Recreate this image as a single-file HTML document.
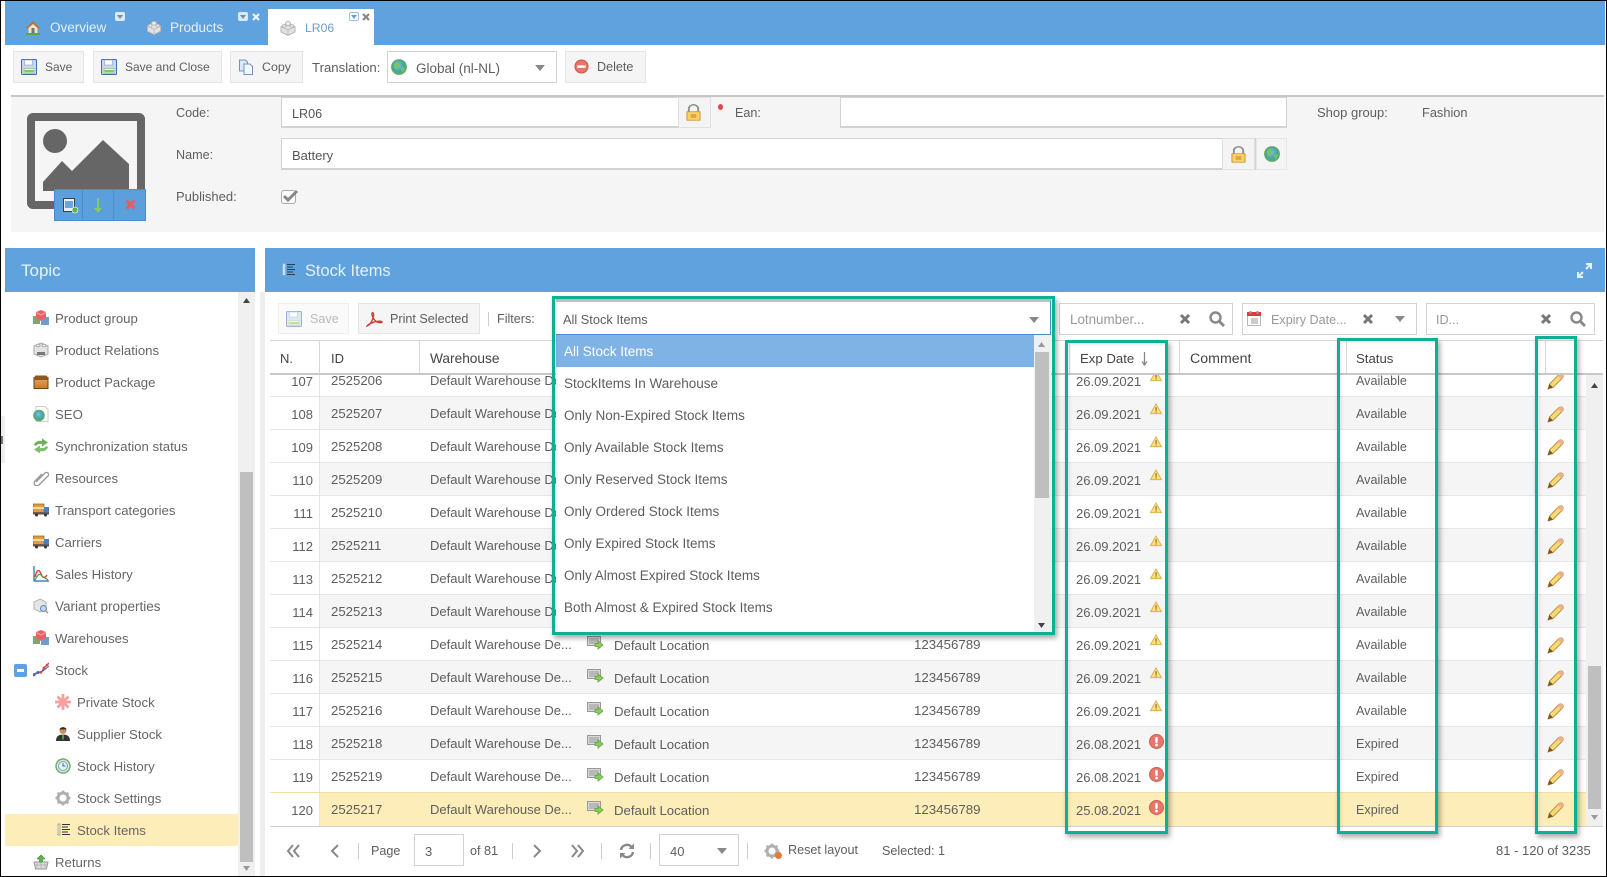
<!DOCTYPE html>
<html><head><meta charset="utf-8"><title>LR06</title>
<style>
*{box-sizing:border-box}
html,body{margin:0;padding:0}
body{width:1607px;height:877px;overflow:hidden;background:#fff;font-family:"Liberation Sans",sans-serif;font-size:12.6px;color:#5e5e5e;position:relative}
#f{position:absolute;inset:0;border:1px solid #000;z-index:50;pointer-events:none}
.a{position:absolute}
.t{position:absolute;white-space:nowrap;line-height:16px;height:16px}
.k{font-size:13.2px;color:#666}
.m{font-size:13.5px;z-index:22;left:564px}
.bar{position:absolute;background:#5fa2de}
.btn{position:absolute;background:#f5f5f5;border:1px solid #e4e4e4}
.inp{position:absolute;background:#fff;border:1px solid #d2d2d2}
svg{position:absolute;display:block;overflow:visible}
.h{color:#e4effa}
#rows{position:absolute;left:270px;top:375px;width:1316px;height:451px;overflow:hidden;background:#fff}
.r{position:absolute;left:0;width:1316px;height:33px;border-top:1px solid #e6e6e6;background:#fff}
.e{background:#f5f5f5}
.y{background:#fdedb9;border-top-color:#f0dfa8;height:34px}
.r b{font-weight:normal;position:absolute;white-space:nowrap;top:9px;line-height:16px}
.r b.n{left:0;top:0;width:50px;height:100%;background:#fff;border-right:1px solid #e6e6e6;line-height:35px;text-align:right;padding-right:6px;font-size:13px}
.r b.i{left:61px;font-size:13.2px}
.r b.c{left:160px;font-size:13px}
.r b.l{left:344px;top:10px;font-size:13.2px}
.r b.o{left:644px;font-size:13.3px}
.r b.d{left:806px;top:10px;font-size:13px}
.r b.s{left:1086px;font-size:12.6px}
.li{left:317px;top:7px;width:17px;height:17px}
.wi{left:880px;top:6px;width:12px;height:12px}
.xi{left:879px;top:7px;width:15px;height:15px}
.pi{left:1277px;top:9px;width:17px;height:17px}
.gb{position:absolute;border:3.5px solid #0db092;box-shadow:2px 3px 5px rgba(0,0,0,.35),inset 2px 2px 3px rgba(0,0,0,.08);z-index:30;border-top-width:3px;border-bottom-width:3px}
.hd{position:absolute;top:341px;width:1px;height:32px;background:#d8d8d8}
.sep{position:absolute;width:1px;height:16px;background:#ccc;top:843px}
</style></head>
<body>
<svg width="0" height="0" style="position:absolute">
<defs>
<radialGradient id="gg" cx=".45" cy=".4" r=".7"><stop offset="0" stop-color="#7cc0ee"/><stop offset=".55" stop-color="#46a59a"/><stop offset="1" stop-color="#62b560"/></radialGradient>
<linearGradient id="pk" x1="0" y1="0" x2="0" y2="1"><stop offset="0" stop-color="#e8a35a"/><stop offset="1" stop-color="#c97a2d"/></linearGradient>
<symbol id="house" viewBox="0 0 16 16"><path d="M1 9L8 2l7 7-1.500 1L8 5 2.500 10z" fill="#b5743a"/><path d="M3.500 9L8 5l4.500 4v5h-9z" fill="#f3e3c2"/><rect x="6.500" y="9" width="3" height="5" fill="#777"/><rect x="1" y="14" width="14" height="2" fill="#5aa845"/></symbol>
<symbol id="cube" viewBox="0 0 16 16"><path d="M8 3l7 3.500V12l-7 3.500L1 12V6.500z" fill="#e2e2e2" stroke="#b5b5b5"/><path d="M1 6.500L8 10l7-3.500M8 10v5.500" fill="none" stroke="#bdbdbd"/><ellipse cx="8" cy="3.500" rx="2.500" ry="2" fill="#eee" stroke="#b5b5b5"/><ellipse cx="4" cy="6" rx="1.800" ry="1.400" fill="#eee" stroke="#bbb"/><ellipse cx="12" cy="6" rx="1.800" ry="1.400" fill="#eee" stroke="#bbb"/></symbol>
<symbol id="save" viewBox="0 0 16 16"><rect x=".5" y=".5" width="15" height="15" rx="1" fill="#c4d8f1" stroke="#3e6fb5"/><rect x="3.500" y="1" width="8" height="5" fill="#fff" stroke="#7c9fd0" stroke-width=".6"/><rect x="3" y="9.500" width="10" height="5" fill="#eef5e8" stroke="#8db56f" stroke-width=".6"/><rect x="3.500" y="11" width="9" height="2.500" fill="#8cc06a"/></symbol>
<symbol id="copy" viewBox="0 0 16 16"><path d="M1.500 1h6l2 2v9h-8z" fill="#dbe8f8" stroke="#6f94c8"/><path d="M6 5h6l2.500 2.500V15.500H6z" fill="#f2f7fd" stroke="#6f94c8"/></symbol>
<symbol id="globe" viewBox="0 0 16 16"><circle cx="8" cy="8" r="7.500" fill="url(#gg)" stroke="#62a95c" stroke-width=".8"/><path d="M5 3l3 1 1 3-3 1-1 3-2-3V5zM11 8l3 1-2 4-2-2z" fill="#7cc45f"/></symbol>
<symbol id="del" viewBox="0 0 16 16"><circle cx="8" cy="8" r="7" fill="#e8756a" stroke="#cf5148"/><rect x="3.500" y="6.800" width="9" height="2.600" fill="#fff"/></symbol>
<symbol id="lock" viewBox="0 0 16 22"><path d="M3 10V6a5 5 0 0 1 10 0v4" fill="none" stroke="#8f8f8f" stroke-width="2"/><rect x="1" y="10" width="14" height="11" fill="#f7d36a" stroke="#d98e20"/><rect x="5" y="13" width="6" height="5" fill="#e0a83a"/></symbol>
<symbol id="pdf" viewBox="0 0 16 16"><path d="M1 15c3-1 5-5 6-9 .5-2-.2-4-1-3.500-1 .8 0 5 3 8 1.500 1.300 5 2 6 1 .5-1-3-1.500-7-.3-3 1-6 2.500-7 3.800z" fill="none" stroke="#cf3a30" stroke-width="1.300"/></symbol>
<symbol id="loc" viewBox="0 0 17 17"><rect x=".5" y="1.500" width="13" height="9" fill="#d8d8d8" stroke="#999"/><rect x="2" y="3" width="10" height="6" fill="#b8b8b8"/><path d="M8 8.500h3V6l5 4-5 4v-2.500H8z" fill="#8ccb5e" stroke="#5aa53a" stroke-width=".8"/></symbol>
<symbol id="warn" viewBox="0 0 13 13"><path d="M6.500 1L12.500 11.500H.5z" fill="#fae07e" stroke="#dcb050"/><rect x="6" y="4.500" width="1.200" height="4" fill="#8a6a20"/><rect x="6" y="9.200" width="1.200" height="1.200" fill="#8a6a20"/></symbol>
<symbol id="err" viewBox="0 0 15 15"><circle cx="7.500" cy="7.500" r="7" fill="#e8776a" stroke="#cd6054"/><rect x="6.300" y="3" width="2.400" height="6" rx="1" fill="#fff"/><circle cx="7.500" cy="11" r="1.400" fill="#fff"/></symbol>
<symbol id="pen" viewBox="0 0 17 17"><path d="M1 16l1.500-5L12 1.500a2 2 0 0 1 3.500 3.500L6 14.500z" fill="#f8d978" stroke="#b98a3a" stroke-width=".9"/><path d="M12 1.500a2 2 0 0 1 3.500 3.500l-1.200 1.200-3.500-3.500z" fill="#f0b090"/><path d="M1 16l1.500-5 3.500 3.500z" fill="#7b5526"/></symbol>
<symbol id="gr" viewBox="0 0 16 16"><rect x="0" y="6" width="7" height="8" fill="#7aa870"/><rect x="8" y="7" width="8" height="8" fill="#6f9dd0"/><path d="M8 0l5 2v6l-5 3-5-3V2z" fill="#ea5f63"/><path d="M3 2.300L8 5l5-2.700" fill="none" stroke="#f6a5a8"/></symbol>
<symbol id="rel" viewBox="0 0 16 16"><path d="M8 1l7 3v8l-7 3-7-3V4z" fill="#e4e4e4" stroke="#aaa"/><rect x="4" y="10" width="8" height="3" fill="#777"/><ellipse cx="5" cy="3.500" rx="2" ry="1.300" fill="#f0f0f0" stroke="#aaa"/><ellipse cx="11" cy="3.500" rx="2" ry="1.300" fill="#f0f0f0" stroke="#aaa"/></symbol>
<symbol id="pkg" viewBox="0 0 16 16"><rect x="1" y="3.500" width="14" height="11" fill="url(#pk)" stroke="#6e4415"/><path d="M1 6h14V3.500L13.500 1.500h-11L1 3.500z" fill="#8b5a20"/></symbol>
<symbol id="seo" viewBox="0 0 16 16"><path d="M3 .5h9l3 3V15.500H3z" fill="#fff" stroke="#ccc"/><circle cx="6" cy="9.500" r="5.500" fill="url(#gg)" stroke="#62a95c" stroke-width=".6"/></symbol>
<symbol id="sync" viewBox="0 0 16 16"><path d="M1 7c.8-3 4-5 8-4V.5l6 4-6 4V6C6 5.500 4 6 3 8z" fill="#6bb05c"/><path d="M15 9c-.8 3-4 5-8 4v2.500l-6-4 6-4V10c3 .5 5 0 6-2z" fill="#7cc06a"/></symbol>
<symbol id="clip" viewBox="0 0 16 16"><path d="M3 12L12 3a2 2 0 0 1 3 3L6 15a2.500 2.500 0 0 1-4-4l7-7" fill="none" stroke="#999" stroke-width="1.300"/></symbol>
<symbol id="truck" viewBox="0 0 16 16"><rect x="0" y="2" width="11" height="8.500" fill="#e59b3d" stroke="#8a5a20" stroke-width=".7"/><rect x="0" y="5" width="11" height="2" fill="#f1d9a7"/><rect x="11" y="5" width="5" height="6" fill="#4d7fbf"/><rect x="0" y="10.500" width="16" height="2" fill="#555"/><circle cx="3.500" cy="13" r="1.500" fill="#333"/><circle cx="12.500" cy="13" r="1.500" fill="#333"/></symbol>
<symbol id="chart" viewBox="0 0 16 16"><path d="M1 0v15h15" fill="none" stroke="#2f64b0" stroke-width="1.200"/><path d="M2 11C4 3 6 3 8 8s4 4 6 1" fill="none" stroke="#e04040" stroke-width="1.500"/><path d="M2 14c2-4 4-7 6-5s4 3 7 5" fill="none" stroke="#49a84a" stroke-width="1.300"/></symbol>
<symbol id="var" viewBox="0 0 16 16"><path d="M7 1l6 3v7l-6 3-6-3V4z" fill="#e6e6e6" stroke="#b5b5b5"/><circle cx="10.500" cy="10.500" r="3" fill="#bcd7f0" stroke="#5d87b8"/><path d="M13 13l2 2" stroke="#d08a30" stroke-width="1.500"/></symbol>
<symbol id="stk" viewBox="0 0 16 16"><path d="M0 14L5 10l3 1 3-5 5-5" fill="none" stroke="#e04848" stroke-width="1.500"/><path d="M0 12l6-2 4-1 6-5" fill="none" stroke="#3a6fb8" stroke-width="1"/><circle cx="5" cy="10.500" r="1.500" fill="#3a6fb8"/><circle cx="11" cy="6" r="1.500" fill="#e04848"/><circle cx="14" cy="3" r="1.300" fill="#e04848"/><circle cx="1" cy="13" r="1.300" fill="#3a6fb8"/></symbol>
<symbol id="ast" viewBox="0 0 16 16"><path d="M8 0v16M0 8h16M2.500 2.500l11 11M13.500 2.500l-11 11" stroke="#f6a0a0" stroke-width="2.800" fill="none"/></symbol>
<symbol id="man" viewBox="0 0 16 16"><circle cx="8" cy="4.500" r="3.500" fill="#c9925f"/><path d="M4.500 3.500C5 .5 11 .5 11.500 3.500z" fill="#3a2a1a"/><path d="M1 15c0-5 3-6.500 7-6.500s7 1.500 7 6.500z" fill="#333"/><rect x="7" y="8.500" width="2" height="5" fill="#4a9a3a"/></symbol>
<symbol id="clock" viewBox="0 0 16 16"><circle cx="8" cy="8" r="7" fill="#d8ead8" stroke="#6eae6e" stroke-width="1.400"/><circle cx="8" cy="8" r="4.500" fill="#e6f1fa" stroke="#7aa4cc"/><path d="M8 5v3h2.500" fill="none" stroke="#3c6ea0"/></symbol>
<symbol id="gear" viewBox="0 0 16 16"><circle cx="8" cy="8" r="5" fill="none" stroke="#b0b0b0" stroke-width="3"/><path d="M8 .5v3M8 12.500v3M.5 8h3M12.500 8h3M2.700 2.700l2 2M11.300 11.300l2 2M2.700 13.300l2-2M11.300 4.700l2-2" stroke="#b0b0b0" stroke-width="2.400"/></symbol>
<symbol id="list" viewBox="0 0 16 16"><rect x="2" y="2" width="2" height="11" fill="none" stroke="#999" stroke-width=".8"/><path d="M6 2.500h8M6 5h6M6 7.500h8M6 10h6M6 12.500h8" stroke="#333" stroke-width="1"/></symbol>
<symbol id="bsk" viewBox="0 0 16 16"><path d="M1 8h14l-1.500 7h-11z" fill="#ddd" stroke="#999"/><path d="M4 8v7M8 8v7M12 8v7M1.500 11h13" stroke="#aaa" stroke-width=".7"/><path d="M8 1l4 4H9.500v3h-3V5H4z" fill="#5cb348" stroke="#3b8a2c" stroke-width=".6"/></symbol>
</defs>
</svg>

<!-- top tabs -->
<div class="bar" style="left:5px;top:1px;width:1600px;height:44px"></div>
<svg style="left:25px;top:19px" width="16" height="16"><use href="#house"/></svg>
<div class="t h" style="left:50px;top:20px;font-size:13.5px">Overview</div>
<div class="a" style="left:115px;top:12px;width:10px;height:9px;background:#dbe9f7;border-radius:2px"></div>
<svg style="left:117px;top:15px" width="6" height="4"><path d="M0 0h6L3 4z" fill="#6f8fb0"/></svg>
<svg style="left:146px;top:20px" width="16" height="15"><use href="#cube"/></svg>
<div class="t h" style="left:170px;top:20px;font-size:13.5px">Products</div>
<div class="a" style="left:238px;top:12px;width:10px;height:9px;background:#dbe9f7;border-radius:2px"></div>
<svg style="left:240px;top:15px" width="6" height="4"><path d="M0 0h6L3 4z" fill="#6f8fb0"/></svg>
<svg style="left:252px;top:13px" width="8" height="8"><path d="M1 1l6 6M7 1L1 7" stroke="#eef4fb" stroke-width="2.200"/></svg>
<div class="a" style="left:268px;top:9px;width:106px;height:36px;background:#fff"></div>
<svg style="left:280px;top:20px" width="16" height="16"><use href="#cube"/></svg>
<div class="t" style="left:305px;top:20px;font-size:12.2px;color:#6f9cc9">LR06</div>
<div class="a" style="left:349px;top:12px;width:10px;height:9px;background:#fff;border:1px solid #9cc0e4;border-radius:2px"></div>
<svg style="left:351px;top:15px" width="6" height="4"><path d="M0 0h6L3 4z" fill="#6f9cc9"/></svg>
<svg style="left:362px;top:13px" width="8" height="8"><path d="M1 1l6 6M7 1L1 7" stroke="#888" stroke-width="2.200"/></svg>

<!-- toolbar -->
<div class="btn" style="left:13px;top:51px;width:71px;height:32px"></div>
<svg style="left:21px;top:59px" width="16" height="16"><use href="#save"/></svg>
<div class="t" style="left:45px;top:59px;font-size:12px">Save</div>
<div class="btn" style="left:93px;top:51px;width:129px;height:32px"></div>
<svg style="left:101px;top:59px" width="16" height="16"><use href="#save"/></svg>
<div class="t" style="left:125px;top:59px;font-size:12px">Save and Close</div>
<div class="btn" style="left:230px;top:51px;width:73px;height:32px"></div>
<svg style="left:238px;top:59px" width="16" height="16"><use href="#copy"/></svg>
<div class="t" style="left:262px;top:59px;font-size:12.4px">Copy</div>
<div class="t" style="left:312px;top:60px;font-size:13.2px">Translation:</div>
<div class="inp" style="left:387px;top:51px;width:170px;height:32px"></div>
<svg style="left:391px;top:59px" width="16" height="16"><use href="#globe"/></svg>
<div class="t" style="left:416px;top:61px;font-size:13.5px">Global (nl-NL)</div>
<svg style="left:535px;top:65px" width="10" height="6"><path d="M0 0h10L5 6z" fill="#888"/></svg>
<div class="btn" style="left:565px;top:51px;width:81px;height:32px"></div>
<svg style="left:574px;top:59px" width="15" height="15"><use href="#del"/></svg>
<div class="t" style="left:597px;top:59px">Delete</div>

<!-- form -->
<div class="a" style="left:11px;top:95px;width:1593px;height:137px;background:#f5f5f5;border-top:2px solid #c6c6c6"></div>
<div class="a" style="left:27px;top:113px;width:118px;height:96px;border:8px solid #666;border-radius:6px;background:#f5f5f5"></div>
<svg style="left:0;top:0" width="200" height="230"><ellipse cx="55" cy="141" rx="12" ry="12" fill="#666"/><path d="M43 191V182L62 161l10 10 31-31 26 24v27z" fill="#666"/></svg>
<div class="a" style="left:54px;top:189px;width:92px;height:32px;background:#5b9fdc;border:1px solid #4a8ecf"></div>
<div class="a" style="left:82px;top:190px;width:1px;height:30px;background:#4a8ecf"></div>
<div class="a" style="left:113px;top:190px;width:1px;height:30px;background:#4a8ecf"></div>
<svg style="left:63px;top:198px" width="15" height="15"><rect x=".5" y=".5" width="11" height="13" fill="#e8f1fa" stroke="#345"/><rect x="2" y="3" width="8" height="7" fill="#6fa6da"/><circle cx="12" cy="12" r="3" fill="#5cb348" stroke="#fff" stroke-width=".6"/></svg>
<svg style="left:94px;top:198px" width="8" height="15"><path d="M3 0h2v10h3l-4 5-4-5h3z" fill="#86cc5c"/></svg>
<svg style="left:125px;top:199px" width="11" height="11"><path d="M1.500 1.500l8 8M9.500 1.500l-8 8" stroke="#ee5a5f" stroke-width="3"/></svg>
<div class="t" style="left:176px;top:105px">Code:</div>
<div class="t" style="left:176px;top:147px">Name:</div>
<div class="t" style="left:176px;top:189px;font-size:13px">Published:</div>
<div class="inp" style="left:281px;top:97px;width:430px;height:31px;border-bottom-width:2px"></div>
<div class="t" style="left:292px;top:106px;color:#555">LR06</div>
<div class="a" style="left:678px;top:97px;width:33px;height:31px;background:#f4f4f4;border:1px solid #e0e0e0"></div>
<svg style="left:686px;top:104px" width="15" height="17" viewBox="0 0 16 22" preserveAspectRatio="none"><use href="#lock"/></svg>
<div class="a" style="left:718px;top:104px;width:5px;height:6px;border-radius:50%;background:#e8454a"></div>
<div class="t" style="left:735px;top:105px">Ean:</div>
<div class="inp" style="left:840px;top:97px;width:447px;height:31px;border-bottom-width:2px"></div>
<div class="t" style="left:1317px;top:105px;font-size:13px">Shop group:</div>
<div class="t" style="left:1422px;top:105px;font-size:12.8px">Fashion</div>
<div class="inp" style="left:281px;top:138px;width:975px;height:32px;border-bottom-width:2px"></div>
<div class="t" style="left:292px;top:148px;color:#555;font-size:13px">Battery</div>
<div class="a" style="left:1222px;top:138px;width:33px;height:32px;background:#f4f4f4;border:1px solid #e0e0e0"></div>
<svg style="left:1231px;top:146px" width="15" height="17" viewBox="0 0 16 22" preserveAspectRatio="none"><use href="#lock"/></svg>
<div class="a" style="left:1256px;top:138px;width:31px;height:32px;background:#f4f4f4;border:1px solid #e6e6e6"></div>
<svg style="left:1264px;top:146px" width="16" height="16"><use href="#globe"/></svg>
<div class="a" style="left:281px;top:190px;width:15px;height:14px;border:1px solid #aaa;border-radius:3px;background:#fafafa"></div>
<svg style="left:283px;top:189px" width="16" height="13"><path d="M1 7l4 4 9-9" fill="none" stroke="#888" stroke-width="3"/></svg>

<!-- topic -->
<div class="bar" style="left:5px;top:248px;width:250px;height:44px"></div>
<div class="t" style="left:21px;top:263px;font-size:17px;color:#eaf3fc">Topic</div>
<div class="a" style="left:238px;top:292px;width:17px;height:585px;background:#f0f0f0"></div>
<div class="a" style="left:240px;top:472px;width:13px;height:390px;background:#bfbfbf"></div>
<svg style="left:243px;top:298px" width="7" height="5"><path d="M0 5h7L3.500 0z" fill="#444"/></svg>
<svg style="left:243px;top:866px" width="7" height="5"><path d="M0 0h7L3.500 5z" fill="#999"/></svg>
<div class="a" style="left:1px;top:416px;width:4px;height:47px;background:#eee"></div>
<div class="a" style="left:1px;top:436px;width:2px;height:8px;background:#777"></div>
<div class="a" style="left:5px;top:814px;width:233px;height:32px;background:#fdedb9"></div>

<svg style="left:33px;top:310px" width="16" height="16"><use href="#gr"/></svg><div class="t k" style="left:55px;top:311px">Product group</div>
<svg style="left:33px;top:342px" width="16" height="16"><use href="#rel"/></svg><div class="t k" style="left:55px;top:343px">Product Relations</div>
<svg style="left:33px;top:374px" width="16" height="16"><use href="#pkg"/></svg><div class="t k" style="left:55px;top:375px">Product Package</div>
<svg style="left:33px;top:406px" width="16" height="16"><use href="#seo"/></svg><div class="t k" style="left:55px;top:407px">SEO</div>
<svg style="left:33px;top:438px" width="16" height="16"><use href="#sync"/></svg><div class="t k" style="left:55px;top:439px">Synchronization status</div>
<svg style="left:33px;top:470px" width="16" height="16"><use href="#clip"/></svg><div class="t k" style="left:55px;top:471px">Resources</div>
<svg style="left:33px;top:502px" width="16" height="16"><use href="#truck"/></svg><div class="t k" style="left:55px;top:503px">Transport categories</div>
<svg style="left:33px;top:534px" width="16" height="16"><use href="#truck"/></svg><div class="t k" style="left:55px;top:535px">Carriers</div>
<svg style="left:33px;top:566px" width="16" height="16"><use href="#chart"/></svg><div class="t k" style="left:55px;top:567px">Sales History</div>
<svg style="left:33px;top:598px" width="16" height="16"><use href="#var"/></svg><div class="t k" style="left:55px;top:599px;font-size:13.5px">Variant properties</div>
<svg style="left:33px;top:630px" width="16" height="16"><use href="#gr"/></svg><div class="t k" style="left:55px;top:631px">Warehouses</div>
<div class="a" style="left:14px;top:664px;width:13px;height:13px;background:#5fa2de;border-radius:2px"></div><div class="a" style="left:17px;top:669px;width:7px;height:3px;background:#fff"></div>
<svg style="left:33px;top:662px" width="16" height="16"><use href="#stk"/></svg><div class="t k" style="left:55px;top:663px">Stock</div>
<svg style="left:55px;top:694px" width="16" height="16"><use href="#ast"/></svg><div class="t k" style="left:77px;top:695px">Private Stock</div>
<svg style="left:55px;top:726px" width="16" height="16"><use href="#man"/></svg><div class="t k" style="left:77px;top:727px">Supplier Stock</div>
<svg style="left:55px;top:758px" width="16" height="16"><use href="#clock"/></svg><div class="t k" style="left:77px;top:759px">Stock History</div>
<svg style="left:55px;top:790px" width="16" height="16"><use href="#gear"/></svg><div class="t k" style="left:77px;top:791px">Stock Settings</div>
<svg style="left:56px;top:822px" width="16" height="16"><use href="#list"/></svg><div class="t k" style="left:77px;top:823px">Stock Items</div>
<svg style="left:33px;top:854px" width="16" height="16"><use href="#bsk"/></svg><div class="t k" style="left:55px;top:855px">Returns</div>

<!-- stock items panel -->
<div class="a" style="left:260px;top:292px;width:5px;height:585px;background:#eee"></div>
<div class="bar" style="left:265px;top:248px;width:1340px;height:44px"></div>
<svg style="left:281px;top:262px" width="16" height="16"><rect x="2" y="2" width="2" height="11" fill="#cfe0f2" stroke="#dde" stroke-width=".5"/><path d="M6 2.500h8M6 5h6M6 7.500h8M6 10h6M6 12.500h8" stroke="#2c3e50" stroke-width="1"/></svg>
<div class="t" style="left:305px;top:263px;font-size:16.4px;color:#e6f0fa">Stock Items</div>
<svg style="left:1577px;top:263px" width="15" height="15"><path d="M9 1h5v5M14 1L9 6M6 14H1V9M1 14l5-5" fill="none" stroke="#e8f1fa" stroke-width="2"/></svg>

<div class="btn" style="left:278px;top:303px;width:71px;height:31px;background:#fafafa;border-color:#eee"></div>
<svg style="left:286px;top:311px;opacity:.5" width="16" height="16"><use href="#save"/></svg>
<div class="t" style="left:310px;top:311px;color:#bbb">Save</div>
<div class="btn" style="left:358px;top:303px;width:122px;height:31px"></div>
<svg style="left:366px;top:310px" width="17" height="17"><use href="#pdf"/></svg>
<div class="t" style="left:390px;top:311px">Print Selected</div>
<div class="a" style="left:488px;top:312px;width:1px;height:14px;background:#ccc"></div>
<div class="t" style="left:497px;top:311px">Filters:</div>

<div class="inp" style="left:1059px;top:303px;width:174px;height:32px"></div>
<div class="t" style="left:1070px;top:312px;color:#999;font-size:13.4px">Lotnumber...</div>
<svg style="left:1180px;top:314px" width="10" height="10"><path d="M1 1l8 8M9 1L1 9" stroke="#777" stroke-width="3"/></svg>
<svg style="left:1209px;top:311px" width="16" height="16"><circle cx="6.500" cy="6.500" r="5" fill="none" stroke="#888" stroke-width="2.400"/><path d="M10 10l5 5" stroke="#888" stroke-width="2.800"/></svg>
<div class="inp" style="left:1242px;top:303px;width:175px;height:32px"></div>
<svg style="left:1247px;top:311px" width="15" height="16"><rect x=".5" y="1.500" width="13" height="13" fill="#fff" stroke="#bbb"/><rect x="0" y="1" width="14" height="4" fill="#d93a3a"/><rect x="2.500" y="0" width="2" height="3" fill="#999"/><rect x="9.500" y="0" width="2" height="3" fill="#999"/><rect x="4" y="7" width="7" height="6" fill="#ccc"/></svg>
<div class="t" style="left:1271px;top:312px;color:#999">Expiry Date...</div>
<svg style="left:1363px;top:314px" width="10" height="10"><path d="M1 1l8 8M9 1L1 9" stroke="#777" stroke-width="3"/></svg>
<svg style="left:1395px;top:316px" width="10" height="6"><path d="M0 0h10L5 6z" fill="#888"/></svg>
<div class="inp" style="left:1426px;top:303px;width:169px;height:32px"></div>
<div class="t" style="left:1436px;top:312px;color:#999">ID...</div>
<svg style="left:1541px;top:314px" width="10" height="10"><path d="M1 1l8 8M9 1L1 9" stroke="#777" stroke-width="3"/></svg>
<svg style="left:1570px;top:311px" width="16" height="16"><circle cx="6.500" cy="6.500" r="5" fill="none" stroke="#888" stroke-width="2.400"/><path d="M10 10l5 5" stroke="#888" stroke-width="2.800"/></svg>

<!-- grid header -->
<div class="a" style="left:270px;top:340px;width:1333px;height:1px;background:#d8d8d8"></div>
<div class="a" style="left:270px;top:373px;width:1333px;height:2px;background:#c8c8c8;z-index:5"></div>
<div class="hd" style="left:319px"></div><div class="hd" style="left:419px"></div><div class="hd" style="left:1069px"></div><div class="hd" style="left:1179px"></div><div class="hd" style="left:1346px"></div><div class="hd" style="left:1545px"></div>
<div class="t" style="left:280px;top:351px;color:#444;font-size:13px">N.</div>
<div class="t" style="left:331px;top:351px;color:#444;font-size:13px">ID</div>
<div class="t" style="left:430px;top:351px;color:#444;font-size:13.7px">Warehouse</div>
<div class="t" style="left:1080px;top:351px;color:#444;font-size:13.2px">Exp Date</div>
<svg style="left:1141px;top:352px" width="7" height="14"><path d="M3.500 0v12M1 9.500l2.500 3.500L6 9.500" fill="none" stroke="#888" stroke-width="1.300"/></svg>
<div class="t" style="left:1190px;top:351px;color:#444;font-size:14.2px">Comment</div>
<div class="t" style="left:1356px;top:351px;color:#444;font-size:13.2px">Status</div>

<!-- rows -->
<div id="rows">
<div class="r" style="top:-12px"><b class="n">107</b><b class="i">2525206</b><b class="c">Default Warehouse De...</b><svg class="li"><use href="#loc"/></svg><b class="l">Default Location</b><b class="o">123456789</b><b class="d">26.09.2021</b><svg class="wi"><use href="#warn"/></svg><b class="s">Available</b><svg class="pi"><use href="#pen"/></svg></div>
<div class="r e" style="top:21px"><b class="n">108</b><b class="i">2525207</b><b class="c">Default Warehouse De...</b><svg class="li"><use href="#loc"/></svg><b class="l">Default Location</b><b class="o">123456789</b><b class="d">26.09.2021</b><svg class="wi"><use href="#warn"/></svg><b class="s">Available</b><svg class="pi"><use href="#pen"/></svg></div>
<div class="r" style="top:54px"><b class="n">109</b><b class="i">2525208</b><b class="c">Default Warehouse De...</b><svg class="li"><use href="#loc"/></svg><b class="l">Default Location</b><b class="o">123456789</b><b class="d">26.09.2021</b><svg class="wi"><use href="#warn"/></svg><b class="s">Available</b><svg class="pi"><use href="#pen"/></svg></div>
<div class="r e" style="top:87px"><b class="n">110</b><b class="i">2525209</b><b class="c">Default Warehouse De...</b><svg class="li"><use href="#loc"/></svg><b class="l">Default Location</b><b class="o">123456789</b><b class="d">26.09.2021</b><svg class="wi"><use href="#warn"/></svg><b class="s">Available</b><svg class="pi"><use href="#pen"/></svg></div>
<div class="r" style="top:120px"><b class="n">111</b><b class="i">2525210</b><b class="c">Default Warehouse De...</b><svg class="li"><use href="#loc"/></svg><b class="l">Default Location</b><b class="o">123456789</b><b class="d">26.09.2021</b><svg class="wi"><use href="#warn"/></svg><b class="s">Available</b><svg class="pi"><use href="#pen"/></svg></div>
<div class="r e" style="top:153px"><b class="n">112</b><b class="i">2525211</b><b class="c">Default Warehouse De...</b><svg class="li"><use href="#loc"/></svg><b class="l">Default Location</b><b class="o">123456789</b><b class="d">26.09.2021</b><svg class="wi"><use href="#warn"/></svg><b class="s">Available</b><svg class="pi"><use href="#pen"/></svg></div>
<div class="r" style="top:186px"><b class="n">113</b><b class="i">2525212</b><b class="c">Default Warehouse De...</b><svg class="li"><use href="#loc"/></svg><b class="l">Default Location</b><b class="o">123456789</b><b class="d">26.09.2021</b><svg class="wi"><use href="#warn"/></svg><b class="s">Available</b><svg class="pi"><use href="#pen"/></svg></div>
<div class="r e" style="top:219px"><b class="n">114</b><b class="i">2525213</b><b class="c">Default Warehouse De...</b><svg class="li"><use href="#loc"/></svg><b class="l">Default Location</b><b class="o">123456789</b><b class="d">26.09.2021</b><svg class="wi"><use href="#warn"/></svg><b class="s">Available</b><svg class="pi"><use href="#pen"/></svg></div>
<div class="r" style="top:252px"><b class="n">115</b><b class="i">2525214</b><b class="c">Default Warehouse De...</b><svg class="li"><use href="#loc"/></svg><b class="l">Default Location</b><b class="o">123456789</b><b class="d">26.09.2021</b><svg class="wi"><use href="#warn"/></svg><b class="s">Available</b><svg class="pi"><use href="#pen"/></svg></div>
<div class="r e" style="top:285px"><b class="n">116</b><b class="i">2525215</b><b class="c">Default Warehouse De...</b><svg class="li"><use href="#loc"/></svg><b class="l">Default Location</b><b class="o">123456789</b><b class="d">26.09.2021</b><svg class="wi"><use href="#warn"/></svg><b class="s">Available</b><svg class="pi"><use href="#pen"/></svg></div>
<div class="r" style="top:318px"><b class="n">117</b><b class="i">2525216</b><b class="c">Default Warehouse De...</b><svg class="li"><use href="#loc"/></svg><b class="l">Default Location</b><b class="o">123456789</b><b class="d">26.09.2021</b><svg class="wi"><use href="#warn"/></svg><b class="s">Available</b><svg class="pi"><use href="#pen"/></svg></div>
<div class="r e" style="top:351px"><b class="n">118</b><b class="i">2525218</b><b class="c">Default Warehouse De...</b><svg class="li"><use href="#loc"/></svg><b class="l">Default Location</b><b class="o">123456789</b><b class="d">26.08.2021</b><svg class="xi"><use href="#err"/></svg><b class="s">Expired</b><svg class="pi"><use href="#pen"/></svg></div>
<div class="r" style="top:384px"><b class="n">119</b><b class="i">2525219</b><b class="c">Default Warehouse De...</b><svg class="li"><use href="#loc"/></svg><b class="l">Default Location</b><b class="o">123456789</b><b class="d">26.08.2021</b><svg class="xi"><use href="#err"/></svg><b class="s">Expired</b><svg class="pi"><use href="#pen"/></svg></div>
<div class="r y" style="top:417px"><b class="n">120</b><b class="i">2525217</b><b class="c">Default Warehouse De...</b><svg class="li"><use href="#loc"/></svg><b class="l">Default Location</b><b class="o">123456789</b><b class="d">25.08.2021</b><svg class="xi"><use href="#err"/></svg><b class="s">Expired</b><svg class="pi"><use href="#pen"/></svg></div>
</div>
<div class="a" style="left:270px;top:826px;width:1333px;height:1px;background:#d0d0d0"></div>
<div class="a" style="left:1586px;top:375px;width:17px;height:451px;background:#f0f0f0"></div>
<div class="a" style="left:1588px;top:666px;width:13px;height:143px;background:#bfbfbf"></div>
<svg style="left:1591px;top:383px" width="7" height="5"><path d="M0 5h7L3.500 0z" fill="#444"/></svg>
<svg style="left:1591px;top:815px" width="7" height="5"><path d="M0 0h7L3.500 5z" fill="#999"/></svg>

<!-- dropdown -->
<div class="a" style="left:556px;top:299px;width:495px;height:36px;background:#fff;border-top:3px solid #c8c8c8;border-right:1px solid #4a8ecf;border-bottom:1px solid #4a8ecf;z-index:20"></div>
<div class="t" style="left:563px;top:312px;z-index:21;font-size:12.8px">All Stock Items</div>
<svg style="left:1029px;top:317px;z-index:21" width="10" height="6"><path d="M0 0h10L5 6z" fill="#888"/></svg>
<div class="a" style="left:556px;top:335px;width:495px;height:297px;background:#fff;z-index:20"></div>
<div class="a" style="left:556px;top:335px;width:478px;height:32px;background:#7fb3e6;z-index:21"></div>
<div class="a" style="left:1034px;top:335px;width:17px;height:297px;background:#f0f0f0;z-index:21"></div>
<div class="a" style="left:1035px;top:352px;width:14px;height:146px;background:#bfbfbf;z-index:22"></div>
<svg style="left:1038px;top:342px;z-index:22" width="7" height="5"><path d="M0 5h7L3.500 0z" fill="#999"/></svg>
<svg style="left:1038px;top:623px;z-index:22" width="7" height="5"><path d="M0 0h7L3.500 5z" fill="#444"/></svg>
<div class="t m" style="top:344px;color:#fff">All Stock Items</div>
<div class="t m" style="top:376px">StockItems In Warehouse</div>
<div class="t m" style="top:408px">Only Non-Expired Stock Items</div>
<div class="t m" style="top:440px">Only Available Stock Items</div>
<div class="t m" style="top:472px">Only Reserved Stock Items</div>
<div class="t m" style="top:504px">Only Ordered Stock Items</div>
<div class="t m" style="top:536px">Only Expired Stock Items</div>
<div class="t m" style="top:568px">Only Almost Expired Stock Items</div>
<div class="t m" style="top:600px">Both Almost &amp; Expired Stock Items</div>

<!-- pager -->
<svg style="left:287px;top:844px" width="14" height="14"><path d="M6 1L1 7l5 6M12 1L7 7l5 6" fill="none" stroke="#888" stroke-width="2"/></svg>
<svg style="left:331px;top:844px" width="8" height="14"><path d="M7 1L1 7l6 6" fill="none" stroke="#888" stroke-width="2"/></svg>
<div class="sep" style="left:358px"></div>
<div class="t" style="left:371px;top:843px">Page</div>
<div class="inp" style="left:414px;top:834px;width:50px;height:32px"></div>
<div class="t" style="left:425px;top:844px;font-size:13px">3</div>
<div class="t" style="left:470px;top:843px">of 81</div>
<div class="sep" style="left:512px"></div>
<svg style="left:533px;top:844px" width="8" height="14"><path d="M1 1l6 6-6 6" fill="none" stroke="#888" stroke-width="2"/></svg>
<svg style="left:570px;top:844px" width="14" height="14"><path d="M2 1l5 6-5 6M8 1l5 6-5 6" fill="none" stroke="#888" stroke-width="2"/></svg>
<div class="sep" style="left:601px"></div>
<svg style="left:619px;top:843px" width="16" height="16"><path d="M2 7a6 6 0 0 1 10.500-3M14 9a6 6 0 0 1-10.500 3" fill="none" stroke="#888" stroke-width="2.400"/><path d="M15 .5V6h-5.500zM1 15.500V10h5.500z" fill="#888"/></svg>
<div class="sep" style="left:650px"></div>
<div class="inp" style="left:659px;top:834px;width:80px;height:32px"></div>
<div class="t" style="left:670px;top:844px;font-size:13px">40</div>
<svg style="left:717px;top:848px" width="10" height="6"><path d="M0 0h10L5 6z" fill="#888"/></svg>
<div class="sep" style="left:747px"></div>
<svg style="left:764px;top:843px" width="16" height="16"><use href="#gear"/></svg>
<div class="a" style="left:775px;top:852px;width:7px;height:7px;border-radius:50%;background:#e8793a"></div>
<div class="t" style="left:788px;top:842px">Reset layout</div>
<div class="t" style="left:882px;top:843px">Selected: 1</div>
<div class="t" style="left:1496px;top:843px;font-size:13px">81 - 120 of 3235</div>

<!-- green annotation boxes -->
<div class="gb" style="left:552px;top:296px;width:503px;height:339px"></div>
<div class="gb" style="left:1065px;top:340px;width:103px;height:494px"></div>
<div class="gb" style="left:1337px;top:338px;width:101px;height:496px"></div>
<div class="gb" style="left:1535px;top:336px;width:42px;height:498px"></div>
<div id="f"></div>
</body></html>
